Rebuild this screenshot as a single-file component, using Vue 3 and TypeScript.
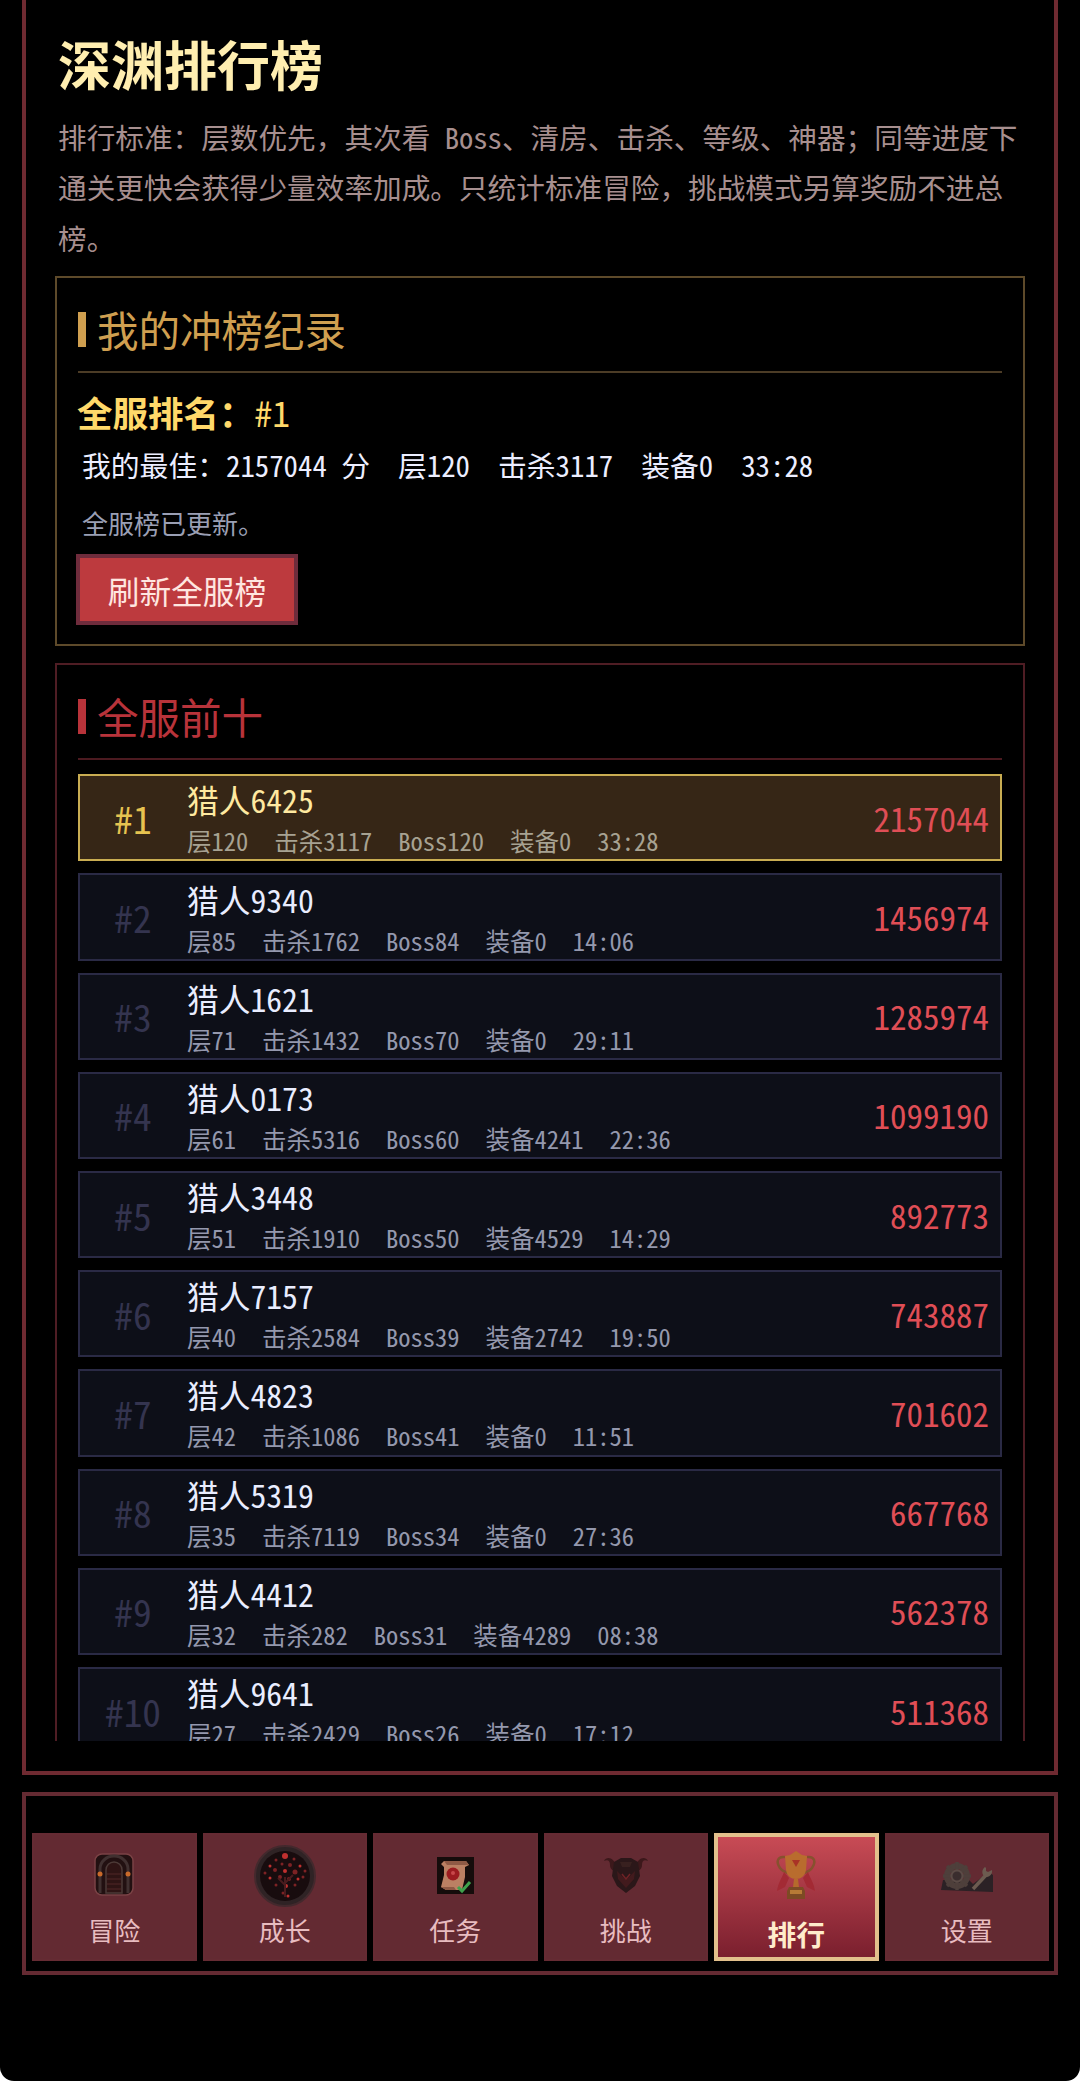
<script setup lang="ts">
interface RankRow {
  name: string;
  floor: number;
  kills: number;
  boss: number;
  gear: number;
  time: string;
  score: number;
}

const rows: RankRow[] = [
  { name: '猎人6425', floor: 120, kills: 3117, boss: 120, gear: 0, time: '33:28', score: 2157044 },
  { name: '猎人9340', floor: 85, kills: 1762, boss: 84, gear: 0, time: '14:06', score: 1456974 },
  { name: '猎人1621', floor: 71, kills: 1432, boss: 70, gear: 0, time: '29:11', score: 1285974 },
  { name: '猎人0173', floor: 61, kills: 5316, boss: 60, gear: 4241, time: '22:36', score: 1099190 },
  { name: '猎人3448', floor: 51, kills: 1910, boss: 50, gear: 4529, time: '14:29', score: 892773 },
  { name: '猎人7157', floor: 40, kills: 2584, boss: 39, gear: 2742, time: '19:50', score: 743887 },
  { name: '猎人4823', floor: 42, kills: 1086, boss: 41, gear: 0, time: '11:51', score: 701602 },
  { name: '猎人5319', floor: 35, kills: 7119, boss: 34, gear: 0, time: '27:36', score: 667768 },
  { name: '猎人4412', floor: 32, kills: 282, boss: 31, gear: 4289, time: '08:38', score: 562378 },
  { name: '猎人9641', floor: 27, kills: 2429, boss: 26, gear: 0, time: '17:12', score: 511368 },
];

const tabs = [
  { id: 'door', label: '冒险' },
  { id: 'tree', label: '成长' },
  { id: 'scroll', label: '任务' },
  { id: 'shield', label: '挑战' },
  { id: 'trophy', label: '排行' },
  { id: 'gear', label: '设置' },
];

// red specks of the growth tree icon
const treeDots = [
  [32, 12, 3], [23, 16, 1.5], [41, 15, 1.5], [17, 22, 1.5], [29, 20, 1.5], [37, 21, 2], [47, 22, 1.5],
  [12, 29, 1.5], [22, 26, 2], [32, 27, 2], [42, 28, 2.5], [52, 27, 1.5], [17, 34, 1.5], [27, 33, 2],
  [36, 35, 2], [45, 35, 1.5], [50, 33, 1.5], [23, 41, 1.5], [33, 42, 2], [42, 41, 1.5], [30, 49, 1.5],
  [35, 52, 1.5],
];
</script>

<template>
  <div class="screen">
    <div class="main-panel">
      <div class="scroller">
        <h1 class="page-title">深渊排行榜</h1>
        <p class="intro">
          排行标准：层数优先，其次看<span class="half"> Boss</span>、清房、击杀、等级、神器；同等进度下通关更快会获得少量效率加成。只统计标准冒险，挑战模式另算奖励不进总榜。
        </p>

        <section class="card card-gold">
          <h2 class="card-title">我的冲榜纪录</h2>
          <div class="my-rank">全服排名：<span class="my-rank-num">#1</span></div>
          <div class="my-best">
            <span>我的最佳：2157044 分</span>
            <span>层120</span>
            <span>击杀3117</span>
            <span>装备0</span>
            <span>33:28</span>
          </div>
          <div class="status">全服榜已更新。</div>
          <button class="refresh-btn">刷新全服榜</button>
        </section>

        <section class="card card-red">
          <h2 class="card-title">全服前十</h2>
          <div class="rank-list">
            <div v-for="(row, i) in rows" :key="row.name" class="rank-row" :class="{ first: i === 0 }">
              <div class="rank-no">#{{ i + 1 }}</div>
              <div class="rank-info">
                <div class="rank-name">{{ row.name }}</div>
                <div class="rank-meta">
                  <span>层{{ row.floor }}</span>
                  <span>击杀{{ row.kills }}</span>
                  <span>Boss{{ row.boss }}</span>
                  <span>装备{{ row.gear }}</span>
                  <span>{{ row.time }}</span>
                </div>
              </div>
              <div class="rank-score">{{ row.score }}</div>
            </div>
          </div>
        </section>
      </div>
    </div>

    <nav class="tab-bar">
      <div v-for="tab in tabs" :key="tab.id" class="tab" :class="{ active: tab.id === 'trophy' }">
        <svg class="tab-icon" width="64" height="64" viewBox="0 0 64 64">
          <template v-if="tab.id === 'door'">
            <rect x="13" y="11" width="38" height="41" rx="7" fill="#221011" stroke="#7a4245" stroke-width="1.5" />
            <path d="M18 50V26a14 13 0 0 1 28 0v24" fill="none" stroke="#403030" stroke-width="3" />
            <path d="M24 50V27a8 8 0 0 1 16 0v23z" fill="#2e1414" stroke="#4c3a37" stroke-width="1.5" />
            <path d="M25 31h14M25 36h14M25 41h14M25 46h14" stroke="#452020" stroke-width="1.5" />
            <circle cx="18" cy="31" r="2.5" fill="#c96a2a" />
            <circle cx="46" cy="31" r="2.5" fill="#c96a2a" />
          </template>

          <template v-else-if="tab.id === 'tree'">
            <circle cx="32" cy="33" r="30" fill="#2f2325" stroke="#43292d" stroke-width="2" />
            <circle cx="32" cy="33" r="25" fill="#180c0e" />
            <circle v-for="(d, n) in treeDots" :key="n" :cx="d[0]" :cy="d[1] + 1" :r="d[2]" :fill="n % 3 === 0 ? '#c0302f' : '#7d2224'" />
            <path d="M32 54V34M32 42l-7-7M32 40l8-8" stroke="#4a1c1e" stroke-width="2" fill="none" />
          </template>

          <template v-else-if="tab.id === 'scroll'">
            <rect x="14" y="14" width="37" height="37" fill="#150c0b" />
            <path d="M21 18h22l3 4-4 2v10l-3 13H23l-5-3 3-12V24l-3-3z" fill="#bb8063" />
            <path d="M21 18h22l3 4H24zM18 44l5 3h10l-2-3z" fill="#8f5a45" />
            <circle cx="30" cy="31" r="6.5" fill="#9c1c20" />
            <circle cx="30" cy="30" r="2" fill="#c8484a" />
            <path d="M35 44l4 4 8-9" fill="none" stroke="#3fa24c" stroke-width="3" />
          </template>

          <template v-else-if="tab.id === 'shield'">
            <path d="M22 23c-1-7-9-11-12-5 4-2 6 0 6 4s3 6 7 7zM42 23c1-7 9-11 12-5-4-2-6 0-6 4s-3 6-7 7z" fill="#3c181b" />
            <path d="M20 19l7-4h10l7 4 2 14-5 10-9 7-9-7-5-10z" fill="#2b1719" />
            <path d="M23 28l9 9 9-9-1 8-8 9-8-9z" fill="#421a1d" />
            <path d="M28 31l4 5 4-5" stroke="#6e2226" stroke-width="1.5" fill="none" />
            <path d="M26 19h12l-2 5h-8z" fill="#38201f" />
          </template>

          <template v-else-if="tab.id === 'trophy'">
            <path d="M21 14c-8-1-9 5-5 11 2 3 5 4 8 5M43 14c8-1 9 5 5 11-2 3-5 4-8 5" fill="none" stroke="#86512e" stroke-width="2.5" />
            <path d="M20 29c-2 6-6 11-7 19l8-4 4-9zM44 29c2 6 6 11 7 19l-8-4-4-9z" fill="#a32a34" />
            <path d="M21 13l5-1 6-4 6 4 5 1-1 14c-1 6-5 9-10 9s-9-3-10-9z" fill="#b96c2e" />
            <path d="M28 17h8l-4 7z" fill="#a93226" />
            <path d="M30 36h4l1 8h-6z" fill="#b56a2c" />
            <path d="M25 44h14l2 4v8H23v-8z" fill="#7d4a24" />
            <rect x="26" y="47" width="12" height="4" fill="#b87a36" />
          </template>

          <template v-else>
            <path d="M6 47l2-10h26l4 4 16-12 4 3v17z" fill="#2b2125" />
            <circle cx="22" cy="33" r="10" fill="none" stroke="#4e3f3b" stroke-width="6" />
            <path d="M22 19v28M8 33h28M12 23l20 20M32 23L12 43" stroke="#4e3f3b" stroke-width="3.5" />
            <circle cx="22" cy="33" r="5.5" fill="#3a2d2e" stroke="#5b4b46" stroke-width="2" />
            <path d="M38 46l14-15" stroke="#6c5b50" stroke-width="3.5" />
            <path d="M50 24a6 6 0 0 0 0 10 6 6 0 0 0 7-7l-4 2-2-1 0-3z" fill="#6c5b50" />
          </template>
        </svg>
        <span class="tab-label">{{ tab.label }}</span>
      </div>
    </nav>
  </div>
</template>

<style scoped>
.screen {
  width: 1080px;
  height: 2081px;
  box-sizing: border-box;
  padding: 0 22px;
  background: #000;
  border-radius: 0 0 14px 14px;
  overflow: hidden;
  font-family: "Noto Sans CJK SC", "Liberation Mono", monospace;
  font-feature-settings: "hwid";
}

.main-panel {
  height: 1775px;
  box-sizing: border-box;
  border: 4px solid #6f2a31;
  border-top: none;
  padding: 0 29px;
}

.scroller {
  height: 1741px;
  overflow: hidden;
}

.page-title {
  margin: 0 0 0 3px;
  padding-top: 33px;
  font-size: 53px;
  line-height: 60px;
  font-weight: 700;
  color: #ffeeb0;
}

.intro {
  margin: 19px 0 13px 3px;
  font-size: 28.65px;
  line-height: 50.4px;
  color: #a78f8f;
  font-feature-settings: normal;
}

.half {
  font-feature-settings: "hwid";
}

.card {
  border: 2px solid;
  padding: 21px 21px 19px;
  margin-bottom: 17px;
}

.card-gold {
  border-color: #5e4a2a;
}

.card-red {
  border-color: #4f1d24;
  padding-bottom: 21px;
}

.card-title {
  margin: 0;
  height: 60px;
  padding-bottom: 12px;
  border-bottom: 2px solid;
  box-sizing: content-box;
  display: flex;
  align-items: center;
  gap: 11px;
  font-size: 41.5px;
  line-height: 60px;
  font-weight: 400;
}

.card-title::before {
  content: "";
  width: 8px;
  height: 35px;
}

.card-gold .card-title {
  color: #cf9f50;
  border-color: #4c3c26;
}

.card-gold .card-title::before {
  background: #cf9f50;
}

.card-red .card-title {
  color: #b8333a;
  border-color: #4c1a20;
}

.card-red .card-title::before {
  background: #b8333a;
}

.my-rank {
  margin: 19px 0 0 -1px;
  font-size: 35.5px;
  line-height: 40px;
  font-weight: 700;
  color: #ffd96a;
}

.my-rank-num {
  font-weight: 400;
}

.my-best {
  display: flex;
  gap: 28px;
  margin: 14px 0 0 4px;
  font-size: 28.8px;
  line-height: 38px;
  color: #eceeff;
}

.status {
  margin: 21px 0 0 4px;
  font-size: 26px;
  line-height: 36px;
  color: #9a9fb4;
}

.refresh-btn {
  display: block;
  margin: 13px 0 0 -2px;
  width: 222px;
  height: 71px;
  border: 4px solid #6f2c3c;
  background: #bd3a3e;
  color: #ffe6e0;
  font-family: inherit;
  font-feature-settings: inherit;
  font-size: 31.7px;
  padding: 0;
}

.rank-list {
  display: flex;
  flex-direction: column;
  gap: 12px;
  margin-top: 14px;
}

.rank-row {
  flex: none;
  height: 87.2px;
  box-sizing: border-box;
  display: flex;
  align-items: center;
  padding: 0 11px 0 0;
  border: 2px solid #2a2a45;
  background: #0d0f18;
}

.rank-row.first {
  border-color: #c9ad52;
  background: #362616;
}

.rank-no {
  width: 106px;
  flex: none;
  text-align: center;
  font-size: 37.4px;
  color: #34344f;
}

.first .rank-no {
  color: #e6c350;
}

.rank-info {
  flex: 1;
  min-width: 0;
  margin-left: 1px;
}

.rank-name {
  font-size: 31.7px;
  line-height: 42px;
  color: #e9edff;
}

.first .rank-name {
  color: #ffe9a0;
}

.rank-meta {
  display: flex;
  gap: 26px;
  margin-top: 5px;
  font-size: 24.5px;
  line-height: 32px;
  color: #9498ad;
}

.first .rank-meta {
  color: #a7a292;
}

.rank-score {
  font-size: 33px;
  color: #e04e56;
}

.tab-bar {
  margin-top: 17px;
  height: 183px;
  box-sizing: border-box;
  border: 4px solid #642a32;
  padding: 37px 5px 9px 6px;
  display: grid;
  grid-template-columns: repeat(6, 1fr);
  gap: 6px;
}

.tab {
  height: 128px;
  box-sizing: border-box;
  border: 2px solid #652b33;
  background: #632a32;
  padding-top: 8px;
  display: flex;
  flex-direction: column;
  align-items: center;
}

.tab-icon {
  display: block;
  flex: none;
}

.tab-label {
  margin-top: 7px;
  font-size: 26px;
  line-height: 32px;
  color: #e8bcc0;
}

.tab.active {
  border: 4px solid #e2c08c;
  background: linear-gradient(180deg, #c84b55, #7a1f2e);
  padding-top: 6px;
}

.active .tab-label {
  margin-top: 11px;
  font-size: 28.8px;
  font-weight: 700;
  color: #ffeccb;
}
</style>

<style>
html,
body {
  background: #fff;
}
</style>
